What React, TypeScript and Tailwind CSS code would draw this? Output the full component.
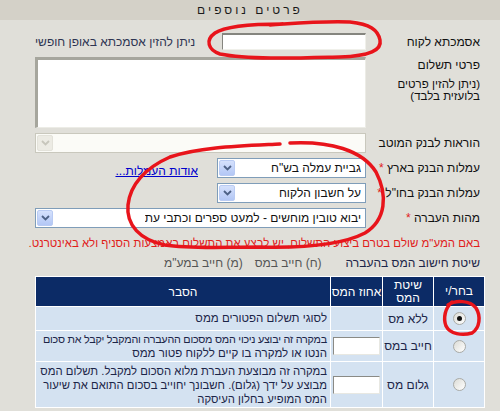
import React from "react";

const font = { fontFamily: '"Liberation Sans", "DejaVu Sans", Arial, sans-serif' };

function Chevron({ color }: { color: string }) {
  return (
    <svg width="9" height="6" viewBox="0 0 9 6">
      <path d="M1 1 L4.5 4.5 L8 1" fill="none" stroke={color} strokeWidth="1.8" />
    </svg>
  );
}

function Select({ text, width, disabled }: { text?: string; width: string; disabled?: boolean }) {
  return (
    <div
      className={`${width} h-[20px] flex items-center justify-between border ${
        disabled ? "border-[#c9c8bd] bg-[#fbfbf7]" : "border-[#7f9db9] bg-white"
      }`}
    >
      <span className="pr-[4px] text-[12px] text-[#111] whitespace-nowrap overflow-hidden">{text}</span>
      <div
        className={`ml-[1px] w-[16px] h-[16px] flex items-center justify-center rounded-[2px] border ${
          disabled
            ? "border-[#e3e2da] bg-[#ecebe4]"
            : "border-[#b9cbf3] bg-gradient-to-b from-[#d5e1fc] to-[#b3c7f5]"
        }`}
      >
        <Chevron color={disabled ? "#c7c6bc" : "#4d6185"} />
      </div>
    </div>
  );
}

function Radio({ checked }: { checked?: boolean }) {
  return (
    <div className="mx-auto w-[13px] h-[13px] rounded-full border border-[#a9aaa6] bg-gradient-to-br from-[#dcdcd6] to-white flex items-center justify-center">
      {checked && <div className="w-[5px] h-[5px] rounded-full bg-[#111]" />}
    </div>
  );
}

function SmallInput() {
  return (
    <div className="mx-auto w-[47px] h-[18px] bg-white border border-t-[#8a8a85] border-l-[#8a8a85] border-r-[#e8e8e2] border-b-[#e8e8e2]" />
  );
}

export default function App() {
  return (
    <div dir="rtl" style={font} className="relative w-[500px] h-[411px] overflow-hidden bg-[#e0dfd9] text-[12px] text-[#111]">
      <div className="h-[20px] bg-[#d4d1c8] flex items-center justify-center text-[12px] tracking-[3px] text-[#1a1a1a]">
        פרטים נוספים
      </div>

      <div className="pr-[20px] pl-[35px] pt-[13px]">
        {/* row 1 */}
        <div className="flex items-center h-[17px]">
          <div className="w-[114px] shrink-0">אסמכתא לקוח</div>
          <div className="flex-1 flex items-center justify-between">
            <div className="w-[144px] h-[17px] bg-white border-t-2 border-l border-t-[#85857f] border-l-[#85857f] border-r border-b border-r-[#f0f0ea] border-b-[#f0f0ea]" />
            <span className="text-[#2e3552] whitespace-nowrap">ניתן להזין אסמכתא באופן חופשי</span>
          </div>
        </div>

        {/* row 2 */}
        <div className="flex mt-[7px] h-[71px]">
          <div className="w-[114px] shrink-0 pt-[1px] whitespace-nowrap">
            <div className="leading-[14px]">פרטי תשלום</div>
            <div className="mt-[6px] leading-[12px] text-[11.5px]">
              <div>(ניתן להזין פרטים</div>
              <div>בלועזית בלבד)</div>
            </div>
          </div>
          <div className="flex-1 bg-white border-t-[3px] border-r border-l-[3px] border-b border-t-[#a6a69d] border-l-[#a6a69d] border-r-[#ecece6] border-b-[#ecece6]" />
        </div>

        {/* row 3 */}
        <div className="flex items-center mt-[5px] h-[20px]">
          <div className="w-[114px] shrink-0 whitespace-nowrap">הוראות לבנק המוטב</div>
          <Select width="flex-1" disabled />
        </div>

        {/* row 4 */}
        <div className="flex items-center mt-[5px] h-[20px]">
          <div className="w-[114px] shrink-0 whitespace-nowrap">
            עמלות הבנק בארץ <span className="text-[#e0201a]">*</span>
          </div>
          <Select width="w-[149px]" text={'גביית עמלה בש"ח'} />
          <a className="mr-[19px] mt-[6px] text-[#0000cc] underline whitespace-nowrap">אודות העמלות...</a>
        </div>

        {/* row 5 */}
        <div className="flex items-center mt-[5px] h-[20px]">
          <div className="w-[114px] shrink-0 whitespace-nowrap">
            עמלות הבנק בחו"ל <span className="text-[#e0201a]">*</span>
          </div>
          <Select width="w-[149px]" text="על חשבון הלקוח" />
        </div>

        {/* row 6 */}
        <div className="flex items-center mt-[5px] h-[20px]">
          <div className="w-[114px] shrink-0 whitespace-nowrap">
            מהות העברה <span className="text-[#e0201a]">*</span>
          </div>
          <Select width="flex-1" text="יבוא טובין מוחשים - למעט ספרים וכתבי עת" />
        </div>

        <div className="mt-[8px] h-[14px] leading-[14px] -ml-[15px] text-[11.45px] text-[#e0201a] whitespace-nowrap">
          באם המע"מ שולם בטרם ביצוע התשלום, יש לבצע את התשלום באמצעות הסניף ולא באינטרנט.
        </div>

        <div className="mt-[6px] h-[14px] leading-[14px] flex whitespace-nowrap">
          <span className="text-[#1c2548]">שיטת חישוב המס בהעברה</span>
          <span className="mr-[24px] text-[#555]">(ח) חייב במס</span>
          <span className="mr-[12px] text-[#555]">(מ) חייב במע"מ</span>
        </div>
      </div>

      <table className="mt-[6px] mr-[15px] w-[450px] table-fixed bg-white border-separate border-spacing-[1px] text-[12px] text-[#1c2548]">
        <colgroup>
          <col className="w-[50px]" />
          <col className="w-[50px]" />
          <col className="w-[51px]" />
          <col />
        </colgroup>
        <thead>
          <tr className="h-[29px] bg-[#0c2b66] text-white">
            <th className="font-normal leading-[13px]">בחר/י</th>
            <th className="font-normal leading-[13px]">
              שיטת
              <br />
              המס
            </th>
            <th className="font-normal whitespace-nowrap">אחוז המס</th>
            <th className="font-normal">הסבר</th>
          </tr>
        </thead>
        <tbody>
          <tr className="h-[23px]">
            <td className="bg-[#d4e2f1]">
              <Radio checked />
            </td>
            <td className="bg-[#d4e2f1] text-center whitespace-nowrap">ללא מס</td>
            <td className="bg-[#d4e2f1]"></td>
            <td className="bg-[#d4e2f1] pr-[3px] text-right text-[11.5px]">לסוגי תשלום הפטורים ממס</td>
          </tr>
          <tr className="h-[30px]">
            <td className="bg-[#d4e2f1]">
              <Radio />
            </td>
            <td className="bg-[#d4e2f1] text-center whitespace-nowrap">חייב במס</td>
            <td className="bg-[#d4e2f1]">
              <SmallInput />
            </td>
            <td className="bg-[#d4e2f1] pr-[3px] text-right text-[11.5px] leading-[14px] whitespace-nowrap overflow-hidden">
              <div className="text-[10.8px] tracking-[-0.25px]">במקרה זה יבוצע ניכוי המס מסכום ההעברה והמקבל יקבל את סכום</div>
              <div>הנטו או למקרה בו קיים ללקוח פטור ממס</div>
            </td>
          </tr>
          <tr className="h-[45px]">
            <td className="bg-[#d4e2f1]">
              <Radio />
            </td>
            <td className="bg-[#d4e2f1] text-center whitespace-nowrap">גלום מס</td>
            <td className="bg-[#d4e2f1]">
              <SmallInput />
            </td>
            <td className="bg-[#d4e2f1] pr-[3px] text-right text-[11.3px] leading-[14px] whitespace-nowrap overflow-hidden">
              <div>במקרה זה מבוצעת העברת מלוא הסכום למקבל. תשלום המס</div>
              <div>מבוצע על ידך (גלום). חשבונך יחוייב בסכום התואם את שיעור</div>
              <div>המס המופיע בחלון העיסקה</div>
            </td>
          </tr>
        </tbody>
      </table>

      <svg className="absolute inset-0 pointer-events-none" width="500" height="411" viewBox="0 0 500 411">
        <g fill="none" stroke="#e8141b" strokeWidth="3.5" strokeLinecap="round" strokeLinejoin="round">
          <path d="M 283 24 C 250 24, 225 26, 215 33 C 205 40, 208 50, 220 54 C 250 60, 300 58, 340 57 C 370 56, 382 50, 380 40 C 378 30, 370 24, 350 22 C 320 21, 300 23, 270 25" />
          <path d="M 290 143 C 330 141, 362 150, 376 172 C 388 195, 386 220, 365 233 C 340 246, 300 248, 260 247 C 220 247, 190 249, 165 245 C 140 240, 126 225, 128 205 C 130 185, 145 168, 170 157 C 200 147, 240 146, 280 144" />
          <path d="M 448 305 C 455 300, 470 300, 476 308 C 481 316, 480 328, 472 333 C 462 336, 450 334, 446 326 C 443 318, 445 308, 452 302" />
        </g>
      </svg>
    </div>
  );
}
